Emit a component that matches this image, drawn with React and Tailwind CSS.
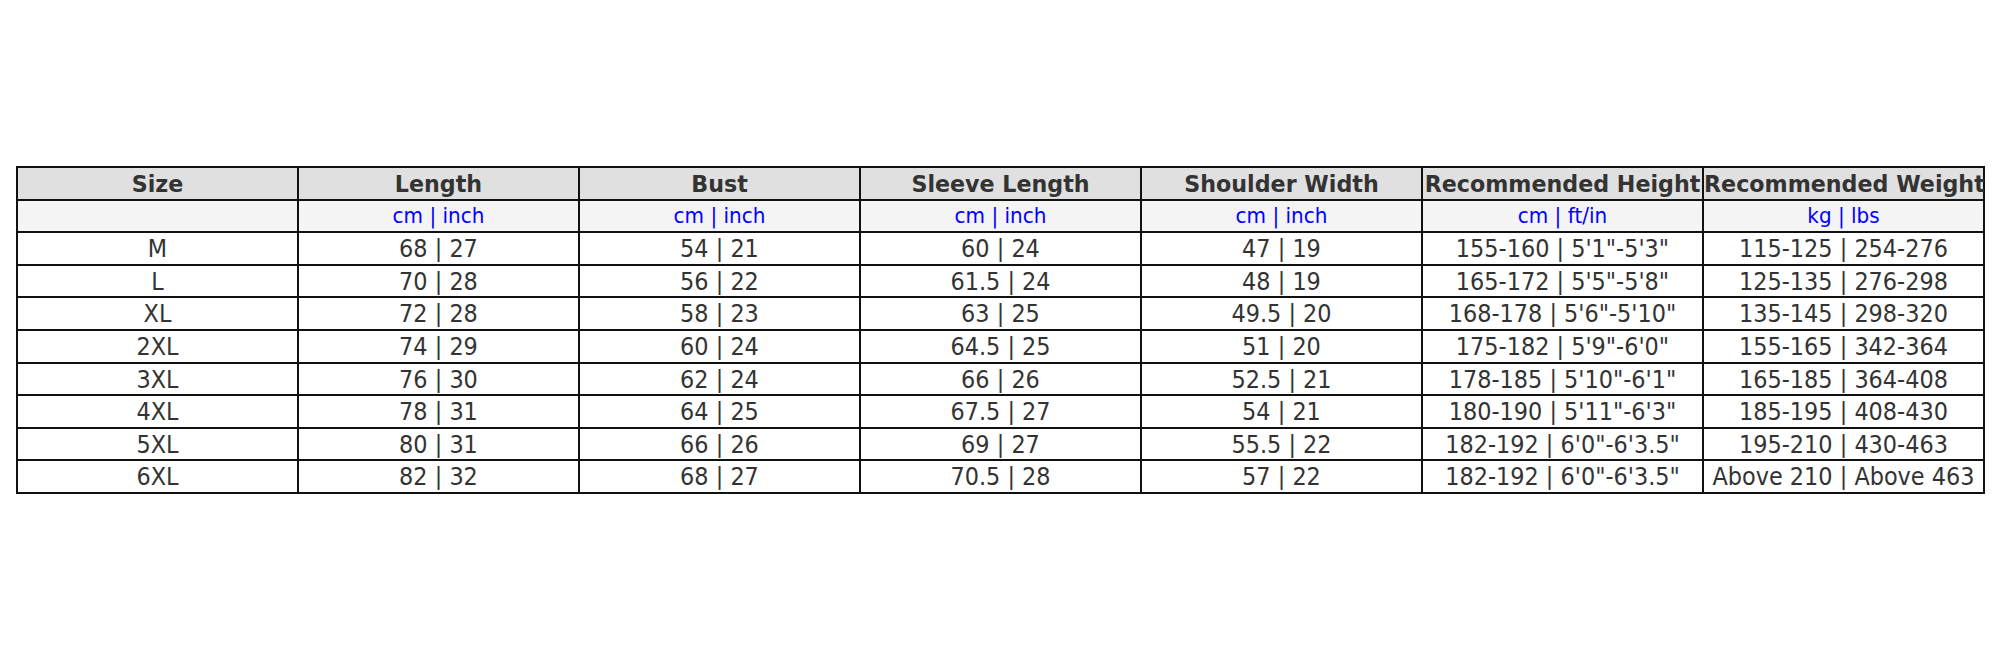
import React from 'react';

const headers = ['Size', 'Length', 'Bust', 'Sleeve Length', 'Shoulder Width', 'Recommended Height', 'Recommended Weight'];
const units = ['', 'cm | inch', 'cm | inch', 'cm | inch', 'cm | inch', 'cm | ft/in', 'kg | lbs'];

const rows = [
  ['M', '68 | 27', '54 | 21', '60 | 24', '47 | 19', '155-160 | 5\'1"-5\'3"', '115-125 | 254-276'],
  ['L', '70 | 28', '56 | 22', '61.5 | 24', '48 | 19', '165-172 | 5\'5"-5\'8"', '125-135 | 276-298'],
  ['XL', '72 | 28', '58 | 23', '63 | 25', '49.5 | 20', '168-178 | 5\'6"-5\'10"', '135-145 | 298-320'],
  ['2XL', '74 | 29', '60 | 24', '64.5 | 25', '51 | 20', '175-182 | 5\'9"-6\'0"', '155-165 | 342-364'],
  ['3XL', '76 | 30', '62 | 24', '66 | 26', '52.5 | 21', '178-185 | 5\'10"-6\'1"', '165-185 | 364-408'],
  ['4XL', '78 | 31', '64 | 25', '67.5 | 27', '54 | 21', '180-190 | 5\'11"-6\'3"', '185-195 | 408-430'],
  ['5XL', '80 | 31', '66 | 26', '69 | 27', '55.5 | 22', '182-192 | 6\'0"-6\'3.5"', '195-210 | 430-463'],
  ['6XL', '82 | 32', '68 | 27', '70.5 | 28', '57 | 22', '182-192 | 6\'0"-6\'3.5"', 'Above 210 | Above 463'],
];

const cell = 'border-2 border-[#111] p-0 text-center align-middle whitespace-nowrap overflow-visible leading-none';

// texte un peu étiré verticalement comme dans l'image d'origine
const T = ({ children }) => <span className="inline-block scale-y-[1.07]">{children}</span>;

export default function App() {
  return (
    <div className="w-[2000px] h-[659px] bg-white overflow-hidden font-['DejaVu_Sans',sans-serif] text-[22.4px] text-[#333]">
      <div className="pt-[166px] pl-[16px]">
        <table className="table-fixed border-collapse w-[1969px]">
          <tbody>
            <tr className="h-[32.6px] bg-[#e0e0e0]">
              {headers.map(h => (
                <td key={h} className={cell + ' font-bold text-[22.2px]'}><T>{h}</T></td>
              ))}
            </tr>
            <tr className="h-[32.6px] bg-[#f4f4f4]">
              {units.map((u, i) => (
                <td key={i} className={cell + ' text-[#0000ff] text-[20px]'}><T>{u}</T></td>
              ))}
            </tr>
            {rows.map(r => (
              <tr key={r[0]} className="h-[32.6px] bg-white">
                {r.map((c, i) => (
                  <td key={i} className={cell}><T>{c}</T></td>
                ))}
              </tr>
            ))}
          </tbody>
        </table>
      </div>
    </div>
  );
}
